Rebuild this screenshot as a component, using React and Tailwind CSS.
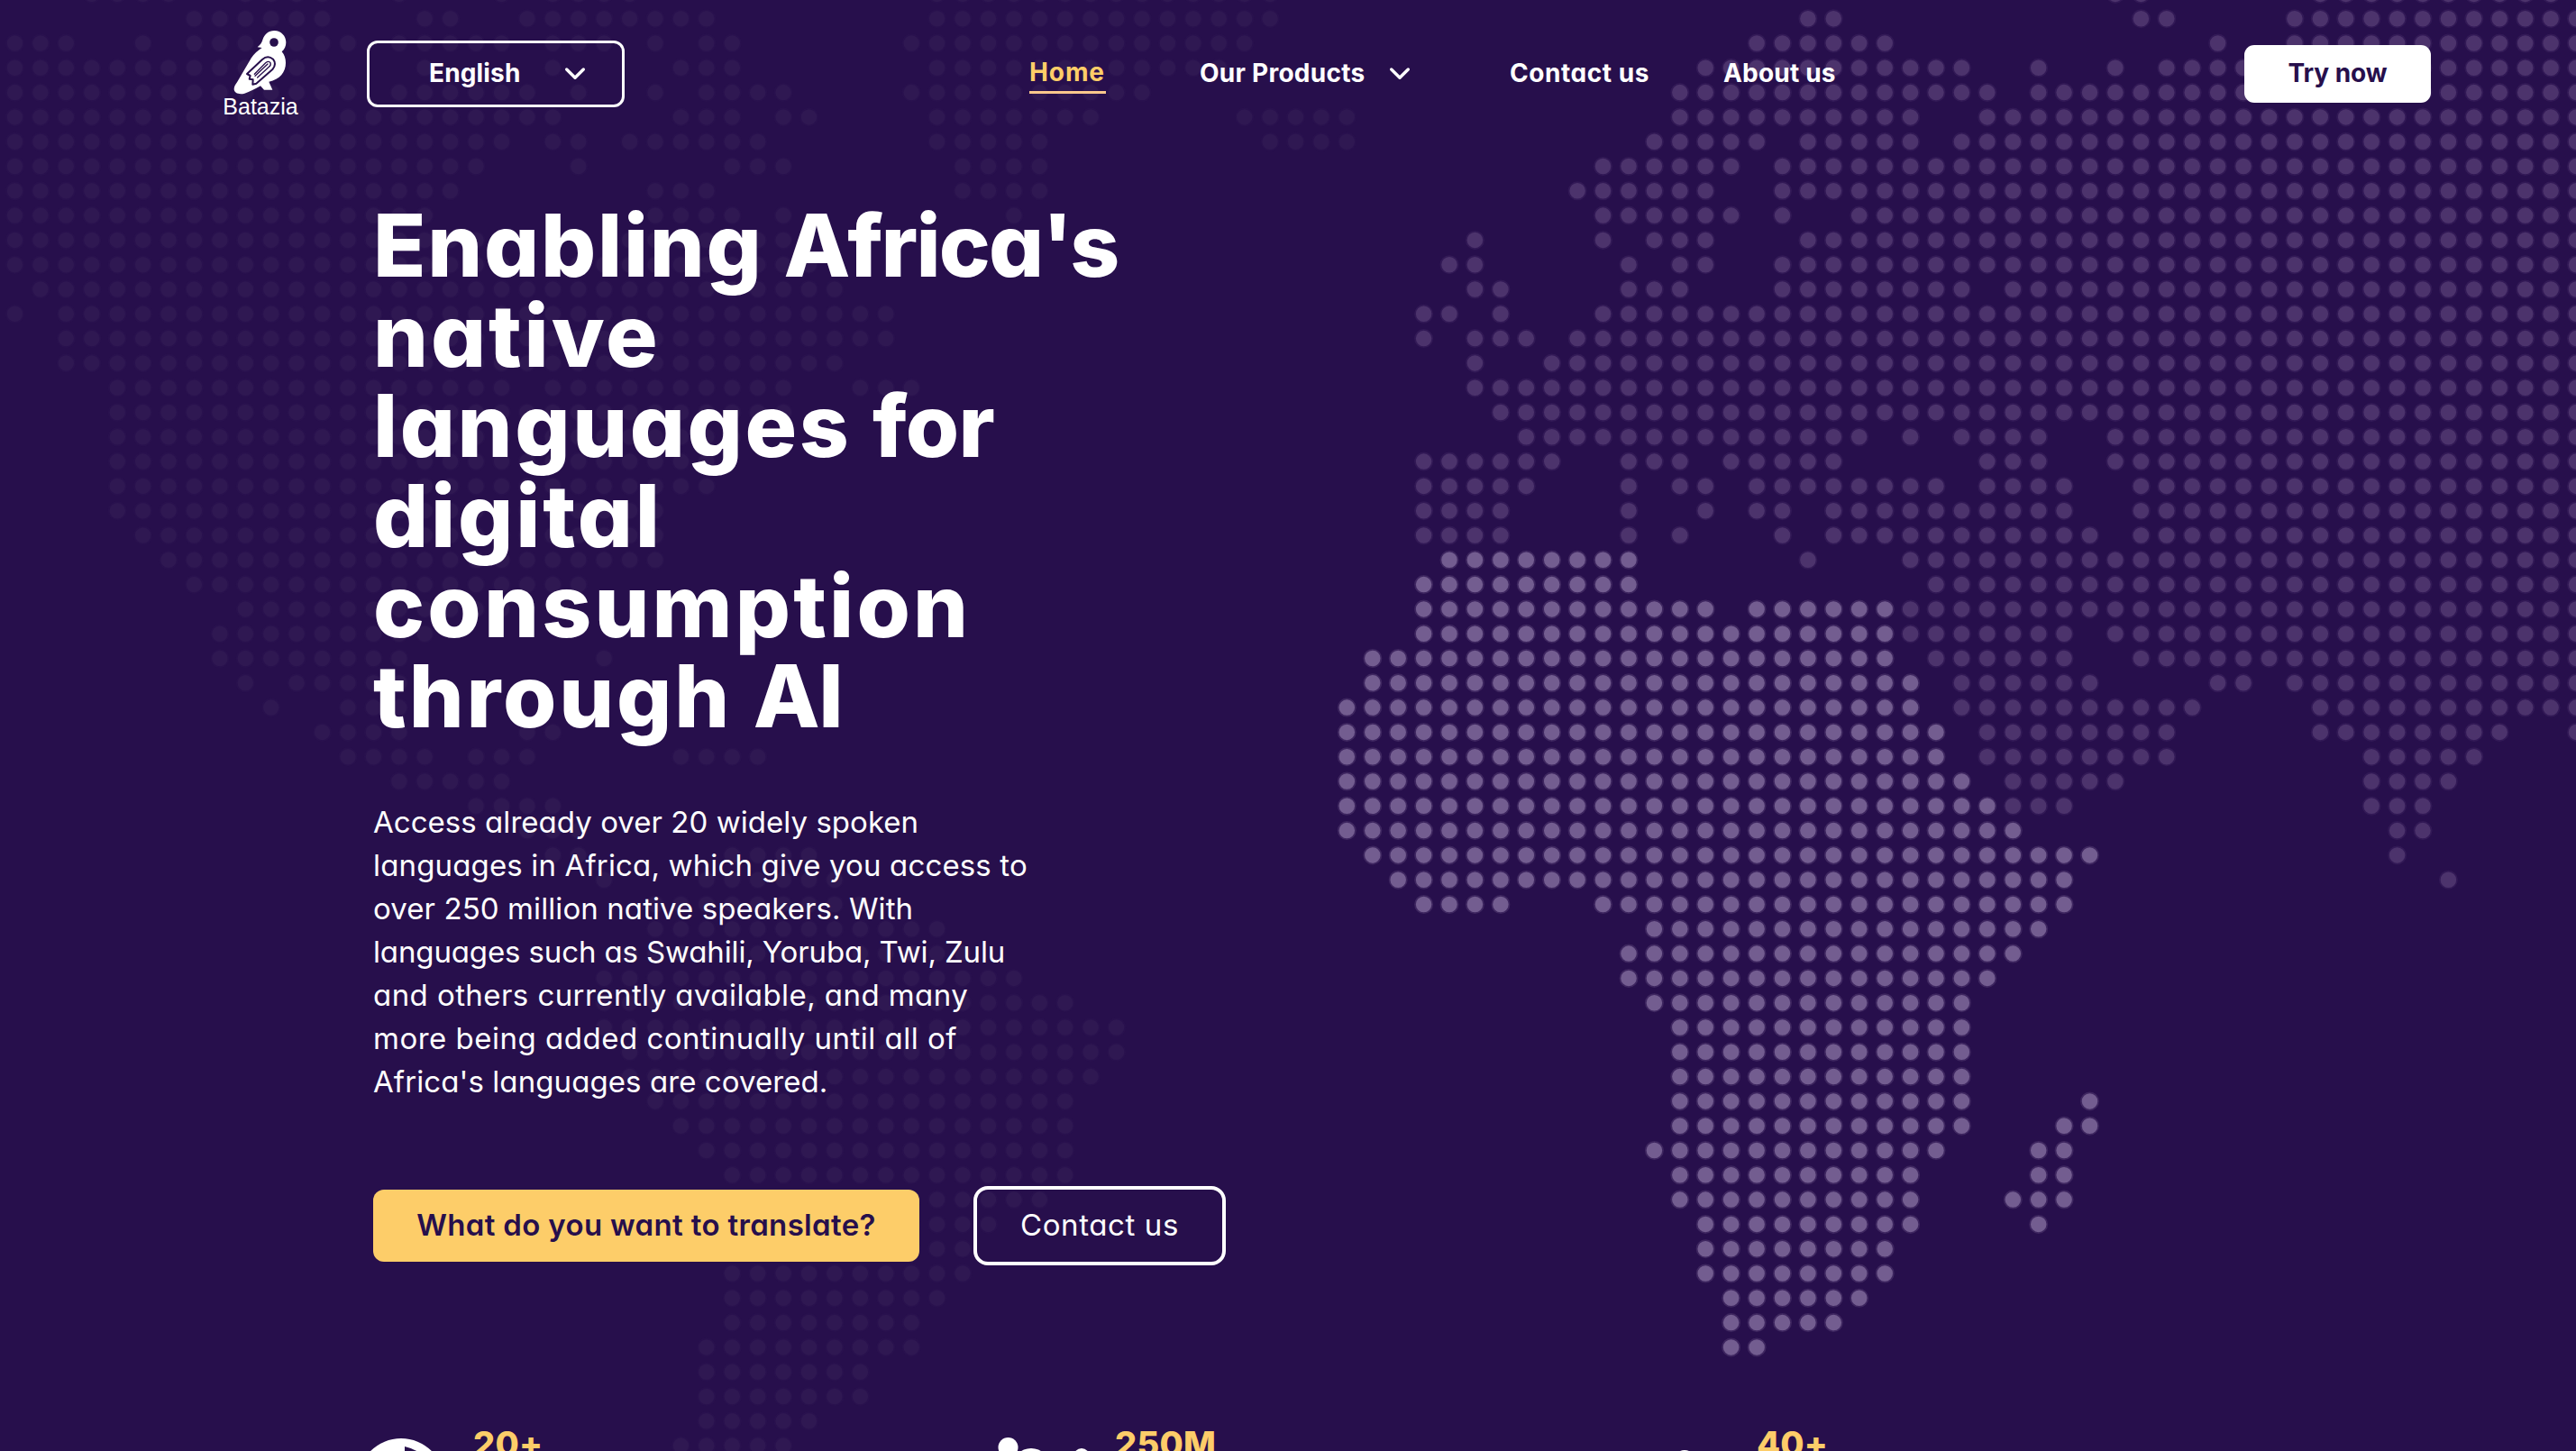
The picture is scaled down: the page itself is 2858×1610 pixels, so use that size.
import React from "react";

// Dotted world map: each entry is [row, from, to, from, to, ...] in grid columns.
const STEP_X = 28.42;
const STEP_Y = 27.3;
const ORIGIN_X = 16.5;
const ORIGIN_Y = 20.7;

const AMERICAS = [
  [-1, 3, 6, 9, 12, 15, 15, 19, 19, 21, 24, 36, 49],
  [0, 7, 12, 16, 17, 20, 27, 36, 49],
  [1, 0, 2, 5, 5, 7, 13, 15, 19, 21, 23, 25, 25, 27, 28, 35, 48],
  [2, 0, 12, 16, 16, 21, 21, 26, 28, 36, 47],
  [3, 0, 13, 15, 20, 22, 22, 25, 25, 27, 30, 35, 44],
  [4, 0, 21, 26, 28, 30, 31, 36, 42, 48, 52],
  [5, 0, 19, 21, 22, 24, 29, 36, 40, 49, 52],
  [6, 0, 18, 22, 22, 28, 30, 37, 40],
  [7, 0, 17, 25, 27, 37, 40],
  [8, 0, 16, 25, 28, 30, 30, 39, 39],
  [9, 0, 18, 24, 30],
  [10, 0, 31],
  [11, 1, 32],
  [12, 0, 0, 2, 34],
  [13, 2, 34],
  [14, 2, 32],
  [15, 4, 19, 21, 30, 33, 35],
  [16, 4, 30],
  [17, 4, 28],
  [18, 4, 27],
  [19, 4, 27],
  [20, 4, 25],
  [21, 5, 25],
  [22, 6, 25],
  [23, 7, 22],
  [24, 9, 20],
  [25, 8, 16],
  [26, 8, 15, 23, 23],
  [27, 9, 9, 11, 15],
  [28, 10, 10, 13, 15],
  [29, 12, 15, 20, 21],
  [30, 13, 16, 18, 20, 26, 29],
  [31, 15, 19],
  [32, 18, 21],
  [33, 20, 22],
  [34, 21, 22, 28, 31],
  [35, 23, 23, 27, 32],
  [36, 25, 33],
  [37, 25, 36],
  [38, 24, 37],
  [39, 23, 39],
  [40, 23, 41],
  [41, 23, 43],
  [42, 24, 43],
  [43, 24, 42],
  [44, 25, 41],
  [45, 26, 41],
  [46, 27, 41],
  [47, 28, 41],
  [48, 28, 40],
  [49, 28, 38],
  [50, 28, 37],
  [51, 28, 37],
  [52, 28, 36],
  [53, 28, 35],
  [54, 27, 35],
  [55, 27, 33],
  [56, 27, 33],
  [57, 27, 31],
  [58, 26, 30],
];

const EURASIA = [
  [-1, 82, 83, 90, 99],
  [0, 70, 71, 83, 84, 89, 100],
  [1, 68, 73, 86, 86, 89, 100],
  [2, 66, 76, 79, 79, 82, 82, 84, 100],
  [3, 65, 77, 79, 100],
  [4, 65, 74, 77, 100],
  [5, 64, 68, 70, 74, 76, 100],
  [6, 62, 67, 69, 100],
  [7, 61, 66, 69, 100],
  [8, 62, 67, 69, 69, 72, 100],
  [9, 57, 57, 62, 62, 64, 66, 70, 100],
  [10, 56, 57, 63, 63, 65, 66, 69, 100],
  [11, 57, 58, 63, 65, 69, 76, 78, 100],
  [12, 55, 56, 58, 58, 62, 100],
  [13, 55, 55, 57, 59, 61, 100],
  [14, 57, 57, 60, 100],
  [15, 57, 100],
  [16, 58, 100],
  [17, 59, 72, 74, 74, 76, 79, 82, 100],
  [18, 55, 60, 63, 65, 67, 71, 77, 79, 82, 100],
  [19, 55, 59, 63, 63, 65, 66, 68, 75, 77, 80, 83, 100],
  [20, 55, 58, 63, 63, 66, 66, 68, 69, 71, 80, 83, 100],
  [21, 55, 58, 63, 63, 65, 65, 69, 69, 71, 81, 83, 100],
  [22, 70, 70, 74, 100],
  [23, 75, 100],
  [24, 74, 100],
  [25, 74, 80, 82, 100],
  [26, 75, 80, 83, 100],
  [27, 76, 81, 86, 87, 89, 100],
  [28, 76, 85, 90, 100],
  [29, 77, 84, 90, 97, 100, 100],
  [30, 77, 84, 92, 96],
  [31, 78, 82, 92, 95],
  [32, 78, 80, 92, 94],
  [33, 93, 94],
  [34, 93, 93],
  [35, 95, 95],
];

const AFRICA = [
  [22, 56, 63],
  [23, 55, 63],
  [24, 55, 66, 68, 73],
  [25, 55, 73],
  [26, 53, 73],
  [27, 53, 74],
  [28, 52, 74],
  [29, 52, 75],
  [30, 52, 75],
  [31, 52, 76],
  [32, 52, 77],
  [33, 52, 78],
  [34, 53, 81],
  [35, 54, 80],
  [36, 55, 58, 62, 80],
  [37, 64, 79],
  [38, 63, 78],
  [39, 63, 77],
  [40, 64, 76],
  [41, 65, 76],
  [42, 65, 76],
  [43, 65, 76],
  [44, 65, 76, 81, 81],
  [45, 65, 76, 80, 81],
  [46, 64, 75, 79, 80],
  [47, 65, 74, 79, 80],
  [48, 65, 74, 78, 80],
  [49, 66, 74, 79, 79],
  [50, 66, 73],
  [51, 66, 73],
  [52, 67, 72],
  [53, 67, 71],
  [54, 67, 68],
];

function dots(rows) {
  let d = "";
  for (const [row, ...runs] of rows) {
    const y = (ORIGIN_Y + row * STEP_Y).toFixed(1);
    for (let i = 0; i < runs.length; i += 2) {
      for (let c = runs[i]; c <= runs[i + 1]; c++) {
        d += `M${(ORIGIN_X + c * STEP_X).toFixed(1)} ${y}h0`;
      }
    }
  }
  return d;
}

function Region({ rows, color }) {
  const d = dots(rows);
  return (
    <g stroke={color} strokeLinecap="round" fill="none">
      <path d={d} strokeWidth="21" strokeOpacity="0.3" />
      <path d={d} strokeWidth="17.5" />
    </g>
  );
}

function WorldMap() {
  return (
    <svg className="absolute inset-0 h-full w-full" viewBox="0 0 2858 1610" aria-hidden="true">
      <Region rows={AMERICAS} color="#2f1852" />
      <Region rows={EURASIA} color="#4c336c" />
      <Region rows={AFRICA} color="#735d90" />
    </svg>
  );
}

function Logo() {
  return (
    <a className="flex h-[100px] w-[84px] flex-col items-center">
      <svg className="h-[75px] w-[62px] shrink-0" viewBox="179 95 186 225">
        <path
          fill="#fff"
          d="M262 156 C272 148 276 142 279 132 C285 112 299 101 318 101 C341 101 357 119 357 140 C357 153 352 163 343 171 C352 182 356 194 356 208 C356 239 336 263 300 271 L312 298 L284 298 L272 285 C254 295 236 305 219 310 C200 315 184 308 184 296 C184 288 188 281 194 273 L238 198 C246 184 256 172 277 158 Z"
        />
        <circle cx="317" cy="140" r="14.5" fill="#270f4c" />
        <path
          d="M227 245 L278 197 Q296 181 314 196 Q327 213 312 230 L258 277 L246 280 L247 264 L235 262 L238 251 Z"
          fill="#fff"
          stroke="#270f4c"
          strokeWidth="6"
          strokeLinejoin="round"
        />
        <path
          d="M252 246 L289 208 Q300 200 305 208 Q308 216 300 222 L262 257 M254 252 L296 212"
          fill="none"
          stroke="#270f4c"
          strokeWidth="4"
          strokeLinecap="round"
        />
      </svg>
      <span className="-mt-[3px] font-['Liberation_Sans',sans-serif] text-[25px] leading-[28px] font-normal text-white">Batazia</span>
    </a>
  );
}

function Chevron() {
  return (
    <svg className="h-4 w-6 shrink-0" viewBox="0 0 24 16" fill="none" stroke="#fff" strokeWidth="3.4" strokeLinecap="round" strokeLinejoin="round">
      <path d="M2.7 3 12 12.2 21.3 3" />
    </svg>
  );
}

function Header() {
  return (
    <header className="relative flex h-[164px] items-center text-[28px] leading-[42px] font-bold whitespace-nowrap text-white">
      <div className="ml-[247px]">
        <Logo />
      </div>
      <button className="ml-[76px] flex h-[74px] w-[286px] items-center rounded-xl border-[3px] border-white pl-[66px]">
        <span className="w-[150px] pb-[2px] text-left tracking-[0.15px]">English</span>
        <Chevron />
      </button>
      <nav className="ml-[449px] flex items-center">
        <a className="flex h-[42px] w-[85px] flex-col">
          <span className="-mt-[2px] tracking-[0.9px] text-[#ffce68]">Home</span>
          <span className="h-[3px] shrink-0 bg-[#fcc88c]" />
        </a>
        <a className="ml-[104px] flex w-[234px] items-center justify-between">
          <span className="pb-[2px] tracking-[0.25px]">Our Products</span>
          <Chevron />
        </a>
        <a className="ml-[110px] w-[158px] pb-[2px] tracking-[0.55px]">Contact us</a>
        <a className="ml-[79px] w-[130px] pb-[2px] tracking-[0.2px]">About us</a>
      </nav>
      <button className="ml-[448px] h-16 w-[207px] rounded-[11px] bg-white pb-[2px] tracking-[-0.1px] text-[#270f4c]">
        Try now
      </button>
    </header>
  );
}

function Hero() {
  return (
    <section className="relative flex flex-col pt-[58px] pl-[414px] whitespace-nowrap text-white">
      <h1 className="flex flex-col text-[96px] leading-[100px] font-extrabold">
        <span>
          <span className="tracking-[1.75px]">Enabling </span>
          <span className="tracking-[-1.9px]">Africa's</span>
        </span>
        <span className="tracking-[2.9px]">native</span>
        <span>
          <span className="tracking-[2.6px]">languages </span>
          <span className="tracking-[-0.8px]">for</span>
        </span>
        <span className="tracking-[2.8px]">digital</span>
        <span className="tracking-[3.2px]">consumption</span>
        <span>
          <span className="tracking-[2.8px]">through </span>
          <span className="tracking-[-1.5px]">AI</span>
        </span>
      </h1>
      <p className="mt-[66px] flex flex-col text-[33px] leading-[48px]">
        <span className="tracking-[0.04px]">Access already over 20 widely spoken</span>
        <span className="tracking-[0.15px]">languages in Africa, which give you access to</span>
        <span className="tracking-[0.09px]">over 250 million native speakers. With</span>
        <span className="tracking-[-0.13px]">languages such as Swahili, Yoruba, Twi, Zulu</span>
        <span className="tracking-[0.43px]">and others currently available, and many</span>
        <span className="tracking-[0.5px]">more being added continually until all of</span>
        <span className="tracking-[0.08px]">Africa's languages are covered.</span>
      </p>
      <div className="mt-[92px] flex items-center gap-[60px] text-[33px]">
        <button className="h-20 w-[606px] rounded-xl bg-[#fdcd69] font-semibold tracking-[0.34px] text-[#270f4c]">
          What do you want to translate?
        </button>
        <button className="h-[88px] w-[280px] rounded-2xl border-4 border-white tracking-[0.6px]">
          Contact us
        </button>
      </div>
    </section>
  );
}

function GlobeIcon() {
  return (
    <svg className="h-24 w-24" viewBox="0 0 96 96">
      <circle cx="48" cy="48" r="48" fill="#fff" />
      <path d="M52 9 Q70 13 80 28 L52 28 Z" fill="#270f4c" />
    </svg>
  );
}

function PeopleIcon() {
  return (
    <svg className="h-24 w-24" viewBox="0 0 96 96" fill="#fff">
      <circle cx="9.500" cy="10" r="11" />
      <circle cx="35" cy="32" r="21" />
      <circle cx="91" cy="20" r="9" />
    </svg>
  );
}

function BadgeIcon() {
  return (
    <svg className="h-24 w-24" viewBox="0 0 96 96" fill="#fff">
      <circle cx="48" cy="25" r="12" />
    </svg>
  );
}

const STATS = [
  { value: "20+", Icon: GlobeIcon },
  { value: "250M", Icon: PeopleIcon },
  { value: "40+", Icon: BadgeIcon },
];

function Stats() {
  return (
    <section className="relative mt-[178px] ml-[397px] grid grid-cols-[712px_712px_712px]">
      {STATS.map(({ value, Icon }) => (
        <div key={value} className="flex items-start gap-8">
          <div className="pt-[14px] [&>svg]:overflow-visible">
            <Icon />
          </div>
          <span className="text-[38px] leading-10 font-extrabold tracking-[0.2px] text-[#fdcd69]">{value}</span>
        </div>
      ))}
    </section>
  );
}

export default function App() {
  return (
    <main className="relative h-[1610px] w-full overflow-hidden bg-[#270f4c] font-['Inter',sans-serif] [font-feature-settings:'cv11']">
      <WorldMap />
      <Header />
      <Hero />
      <Stats />
    </main>
  );
}
